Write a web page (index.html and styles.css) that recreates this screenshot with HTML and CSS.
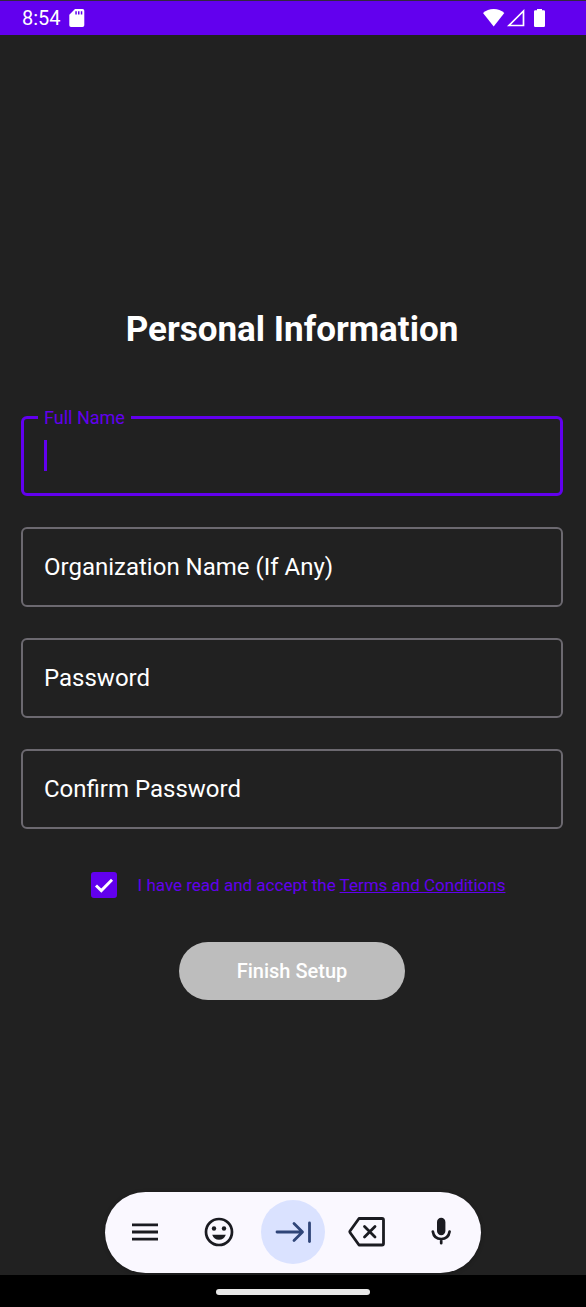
FILE: index.html
```html
<!DOCTYPE html>
<html lang="en">
<head>
<meta charset="utf-8">
<meta name="viewport" content="width=device-width, initial-scale=1">
<title>Personal Information</title>
<link rel="stylesheet" href="styles.css">
</head>
<body class="screen">
<header class="status">
  <div class="status-group">
    <span class="clock">8:54</span>
    <svg class="icon-sd" viewBox="0 0 16 18" width="16" height="18" aria-hidden="true"><path fill="#fff" fill-rule="evenodd" d="M6 0H13.500Q15.300 0 15.300 1.800V16.200Q15.300 18 13.500 18H2Q.3 18 .3 16.200V5.700ZM6.300 2.300V5.500H7.800V2.300ZM9 2.300V5.500H10.500V2.300ZM11.800 2.300V5.500H13.300V2.300Z"/></svg>
  </div>
  <div class="status-group status-right">
    <svg viewBox="0 0 60 20" width="60" height="20" aria-hidden="true">
      <path fill="#fff" d="M0 5Q4.500 1 10.700 1T21.300 5L10.700 18.500Z"/>
      <path fill="none" stroke="#fff" stroke-width="1.700" d="M26 17.500H40.500V3Z"/>
      <path fill="#fff" d="M54 1H59V2.300H60.800Q62 2.300 62 3.500V17.800Q62 19 60.800 19H52.200Q51 19 51 17.800V3.500Q51 2.300 52.200 2.300H54Z"/>
    </svg>
  </div>
</header>

<main class="content">
  <h1 class="title">Personal Information</h1>
  <form class="form">
    <div class="field field-active">
      <label class="field-label" for="full-name">Full Name</label>
      <input class="field-input" id="full-name" type="text">
      <span class="caret" aria-hidden="true"></span>
    </div>
    <div class="field">
      <input class="field-input" type="text" placeholder="Organization Name (If Any)" aria-label="Organization Name (If Any)">
    </div>
    <div class="field">
      <input class="field-input" type="password" placeholder="Password" aria-label="Password">
    </div>
    <div class="field">
      <input class="field-input" type="password" placeholder="Confirm Password" aria-label="Confirm Password">
    </div>
    <div class="terms">
      <span class="check">
        <input class="check-box" id="accept" type="checkbox" checked>
        <svg class="check-mark" viewBox="0 0 26 26" width="26" height="26" aria-hidden="true"><path fill="none" stroke="#fff" stroke-width="2.900" d="M5 13.500L10.300 18.600L21 7.800"/></svg>
      </span>
      <label class="terms-text" for="accept">I have read and accept the <a class="terms-link" href="#terms">Terms and Conditions</a></label>
    </div>
    <button class="submit" type="button">Finish Setup</button>
  </form>
</main>

<div class="toolbar" role="toolbar" aria-label="Keyboard">
  <button class="tool" type="button" aria-label="Menu">
    <svg viewBox="0 0 40 40" width="40" height="40"><path stroke="#1a1b21" stroke-width="2.800" d="M7 12.800H33M7 20H33M7 27.200H33"/></svg>
  </button>
  <button class="tool" type="button" aria-label="Emoji">
    <svg viewBox="0 0 40 40" width="40" height="40"><circle cx="20" cy="20" r="13" fill="none" stroke="#1a1b21" stroke-width="2.700"/><circle cx="15" cy="16.500" r="2.200" fill="#1a1b21"/><circle cx="25" cy="16.500" r="2.200" fill="#1a1b21"/><path fill="#1a1b21" d="M13.200 22.700H26.800Q25 27.700 20 27.700T13.200 22.700Z"/></svg>
  </button>
  <button class="tool tool-active" type="button" aria-label="Next field">
    <svg viewBox="0 0 40 40" width="40" height="40"><path fill="none" stroke="#2f4578" stroke-width="2.800" stroke-linecap="round" stroke-linejoin="round" d="M4 20H29M21 11.500L29.500 20L21 28.500"/><path stroke="#2f4578" stroke-width="2.800" stroke-linecap="round" d="M36.500 11V29.500"/></svg>
  </button>
  <button class="tool" type="button" aria-label="Delete">
    <svg viewBox="0 0 40 40" width="40" height="40"><path fill="none" stroke="#1a1b21" stroke-width="2.800" stroke-linejoin="round" d="M12 6.500H35Q36.500 6.500 36.500 8V31.500Q36.500 33 35 33H12L3 20.500Q2.500 19.800 3 19Z"/><path stroke="#1a1b21" stroke-width="2.800" stroke-linecap="round" d="M17.500 14.500L28 25M28 14.500L17.500 25"/></svg>
  </button>
  <button class="tool" type="button" aria-label="Voice input">
    <svg viewBox="0 0 40 40" width="40" height="40"><rect x="16" y="5.700" width="8.400" height="17.500" rx="4.200" fill="#1a1b21"/><path fill="none" stroke="#1a1b21" stroke-width="2.700" stroke-linecap="round" d="M11.800 19.500Q13 27 20.200 27T28.600 19.500M20.200 27V31.200"/></svg>
  </button>
</div>

<footer class="nav"><span class="handle"></span></footer>
</body>
</html>
```
FILE: styles.css
```css
* {
  box-sizing: border-box;
}

.screen {
  --purple: #6200ee;
  --surface: #212121;
  margin: 0;
  min-height: 100vh;
  display: flex;
  flex-direction: column;
  background: var(--surface);
  color: #fff;
  font-family: Roboto, sans-serif;
}

.status {
  display: flex;
  justify-content: space-between;
  align-items: center;
  height: 35px;
  padding: 0 43px 0 22px;
  border-top: 1px solid #32283f;
  background: var(--purple);
}

.status-group {
  display: flex;
  align-items: center;
  gap: 8px;
}

.status-right svg {
  overflow: visible;
}

.clock {
  font-size: 20px;
  line-height: 24px;
}

.content {
  flex: 1;
  padding: 274px 23px 32px 21px;
}

.title {
  margin: 0;
  font-size: 35px;
  line-height: 42px;
  font-weight: 700;
  text-align: center;
}

.form {
  display: flex;
  flex-direction: column;
  gap: 31px;
  margin-top: 65px;
}

.field {
  position: relative;
}

.field-input {
  display: block;
  width: 100%;
  height: 80px;
  padding: 0 21px;
  border: 2px solid #6c6970;
  border-radius: 6px;
  outline: none;
  background: transparent;
  color: #fff;
  caret-color: var(--purple);
  font-family: inherit;
  font-size: 24px;
}

.field-input::placeholder {
  color: #fff;
  opacity: 1;
}

.field-active .field-input {
  border: 3px solid var(--purple);
  padding: 0 20px;
}

.field-label {
  position: absolute;
  top: -9px;
  left: 17px;
  padding: 0 6px;
  background: var(--surface);
  color: var(--purple);
  font-size: 18px;
  line-height: 22px;
}

.caret {
  position: absolute;
  top: 24px;
  left: 23px;
  width: 3px;
  height: 31px;
  background: var(--purple);
}

.terms {
  display: flex;
  justify-content: center;
  align-items: center;
  gap: 21px;
  margin: 12px 0 13px;
  padding-left: 12px;
}

.check {
  display: grid;
}

.check-box,
.check-mark {
  grid-area: 1 / 1;
}

.check-box {
  appearance: none;
  width: 26px;
  height: 26px;
  margin: 0;
  border: 2px solid var(--purple);
  border-radius: 3px;
}

.check-box:checked {
  background: var(--purple);
}

.check-mark {
  pointer-events: none;
}

.terms-text {
  color: var(--purple);
  font-size: 17px;
  line-height: 24px;
}

.terms-link {
  color: inherit;
}

.submit {
  align-self: center;
  padding: 17px 58px;
  border: 0;
  border-radius: 29px;
  background: #bdbdbd;
  color: #fff;
  font-family: inherit;
  font-size: 20px;
  line-height: 24px;
  font-weight: 500;
}

.toolbar {
  display: flex;
  align-self: center;
  align-items: center;
  gap: 10px;
  margin-bottom: 2px;
  padding: 8px 8px 9px;
  border-radius: 41px;
  background: #faf8ff;
  box-shadow: 0 1px 4px #00000040;
}

.tool {
  display: grid;
  place-items: center;
  width: 64px;
  height: 64px;
  padding: 0;
  border: 0;
  border-radius: 50%;
  background: transparent;
}

.tool-active {
  background: #dae2ff;
}

.nav {
  display: flex;
  justify-content: center;
  align-items: center;
  height: 32px;
  padding-top: 2px;
  background: #000;
}

.handle {
  width: 154px;
  height: 6px;
  border-radius: 3px;
  background: #e8e8e8;
}
```
